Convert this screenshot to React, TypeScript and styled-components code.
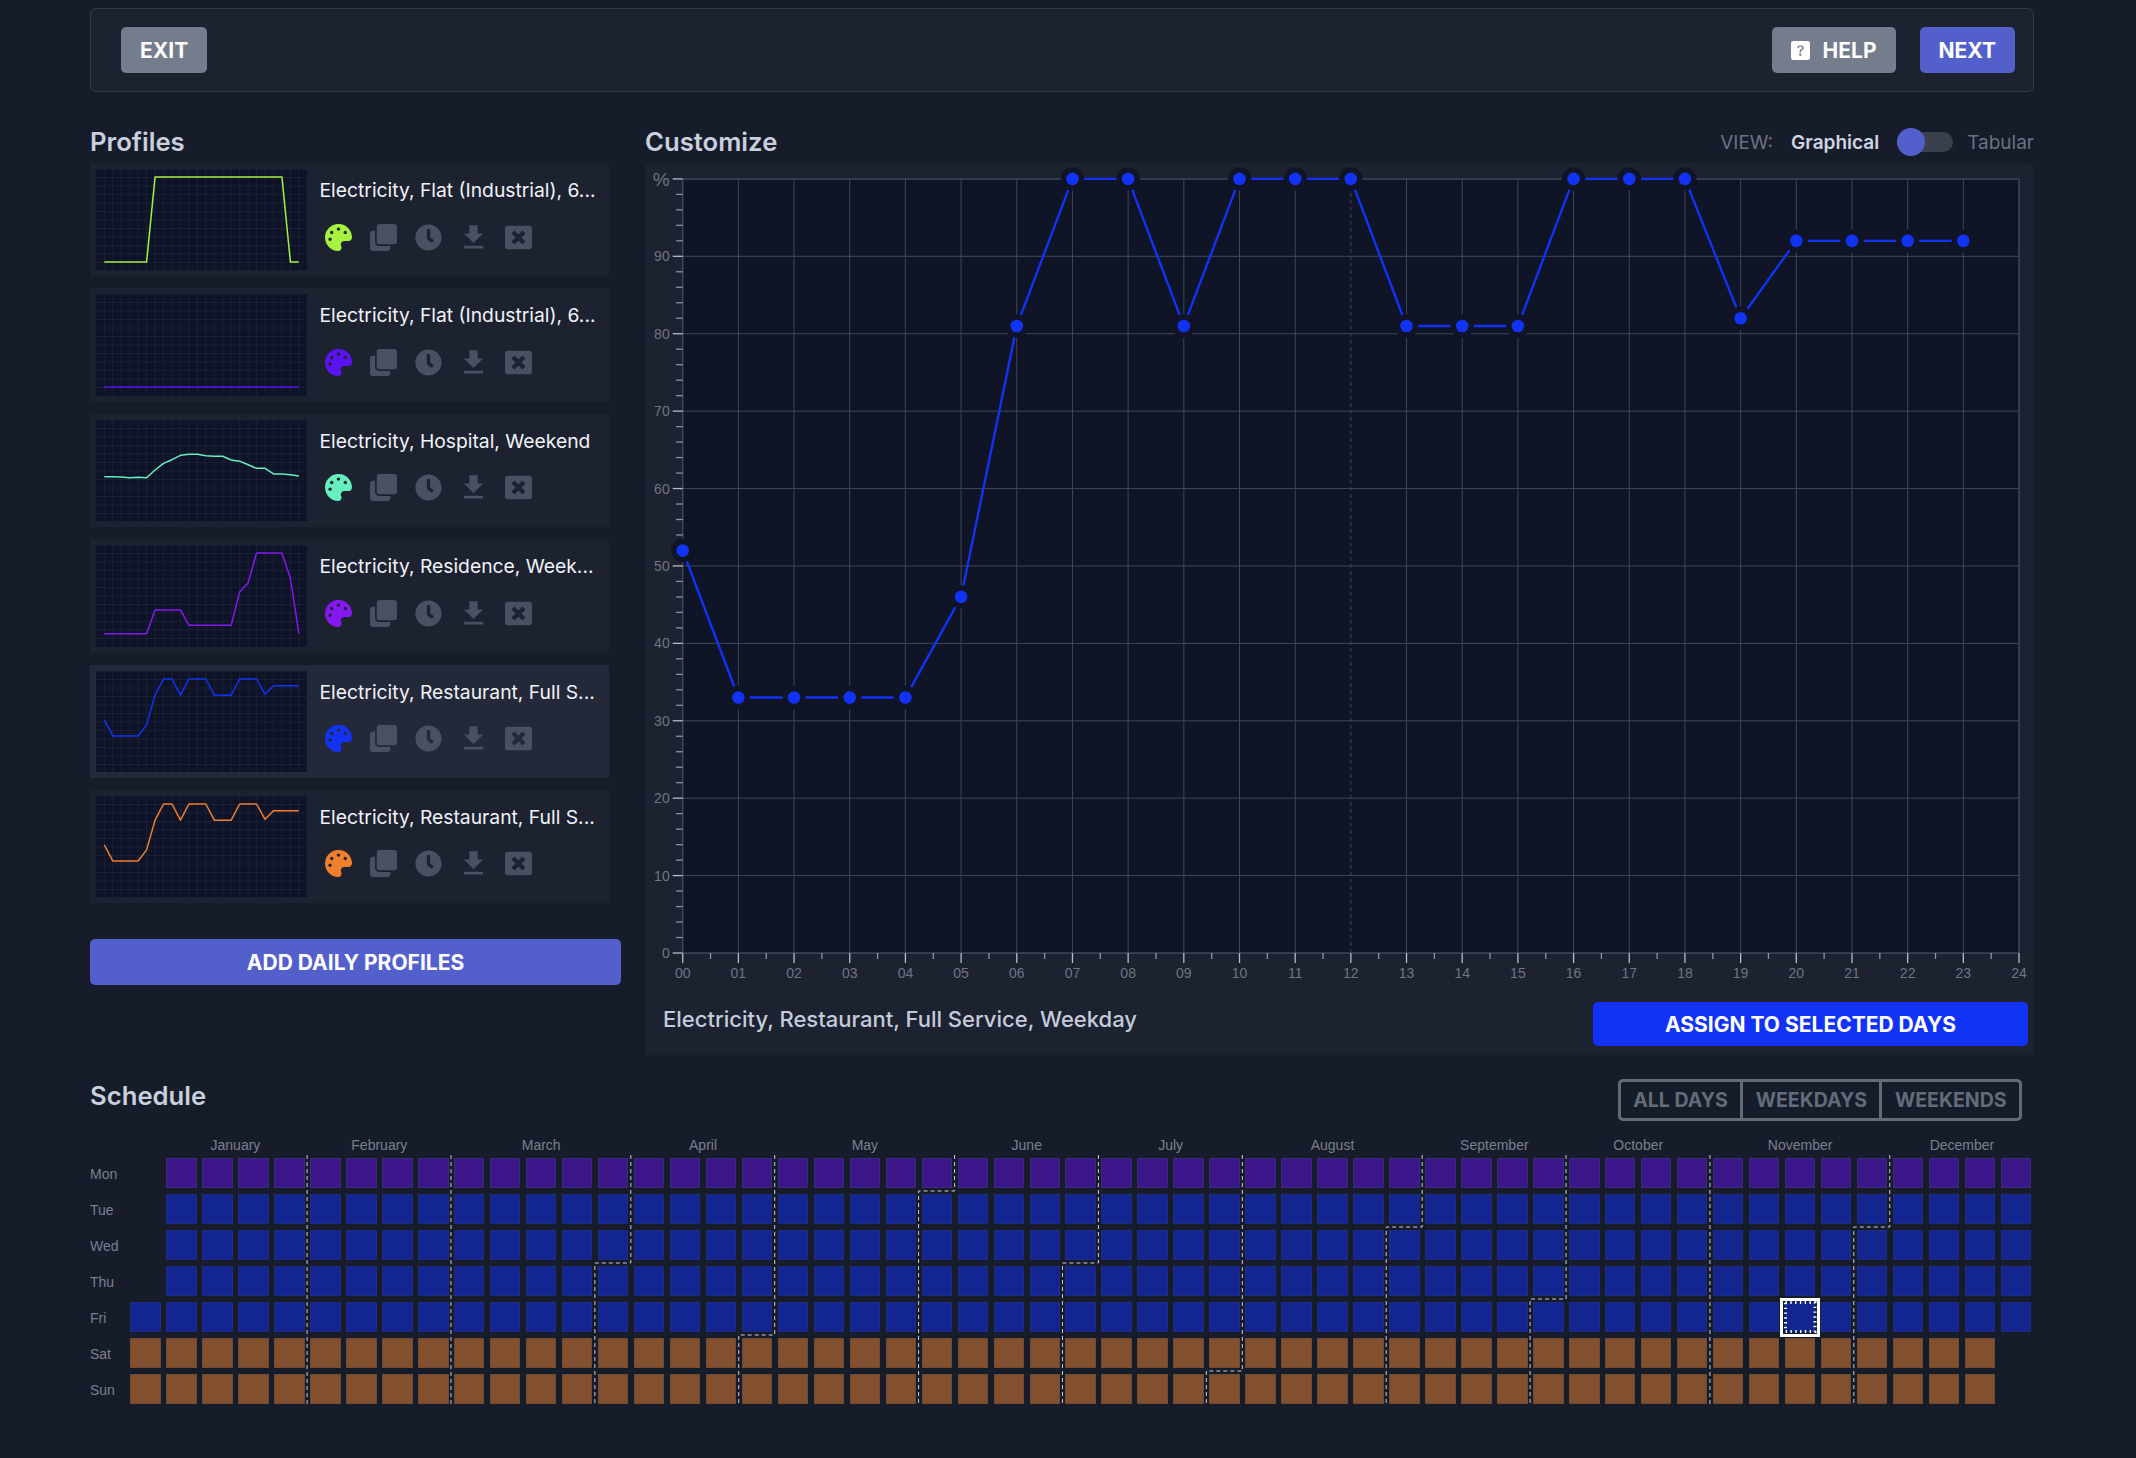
import React from 'react';
import styled, { createGlobalStyle } from 'styled-components';
import { FaPalette, FaClone, FaClock, FaWindowClose } from 'react-icons/fa';
import { MdFileDownload } from 'react-icons/md';
import { BsQuestionSquareFill } from 'react-icons/bs';

const PLOT_BG = '#0f1426';
const BLUE = '#1232f5';
const GRID = '#41465a';

const Global = createGlobalStyle`
  html, body { margin: 0; padding: 0; background: #171c2b; }
  body { font-family: Inter, "Liberation Sans", sans-serif; min-height: 100vh; }
  * { box-sizing: border-box; }
`;

const Page = styled.div`
  padding: 8px 102px 0 90px;
  width: 2136px;
`;

const TopBar = styled.header`
  height: 84px;
  background: #1c2230;
  border: 1px solid #343a46;
  border-radius: 6px;
  display: flex;
  align-items: center;
  justify-content: space-between;
  padding: 0 18px 0 30px;
`;

const ButtonGroup = styled.div`
  display: flex;
  gap: 24px;
`;

const ActionButton = styled.button<{ $tone: 'gray' | 'indigo' | 'blue' }>`
  height: ${(p) => (p.$tone === 'blue' ? 44 : 46)}px;
  border: none;
  border-radius: 5px;
  padding: 0 19px;
  display: flex;
  align-items: center;
  justify-content: center;
  gap: 13px;
  color: #fff;
  font-family: Inter, sans-serif;
  font-weight: 700;
  font-size: 21px;
  background: ${(p) => (p.$tone === 'gray' ? '#757c8b' : p.$tone === 'indigo' ? '#535fcb' : BLUE)};
`;

const WideButton = styled(ActionButton)`
  width: 531px;
  margin-top: 36px;
`;

const AssignButton = styled(ActionButton)`
  width: 435px;
`;

const Columns = styled.div`
  display: flex;
  gap: 24px;
  align-items: flex-start;
`;

const LeftColumn = styled.section`
  width: 531px;
  flex: none;
`;

const RightColumn = styled.section`
  width: 1389px;
  flex: none;
`;

const SectionHead = styled.div`
  height: 71px;
  padding-top: 31px;
  display: flex;
  justify-content: space-between;
  align-items: flex-start;
`;

const Title = styled.h2`
  margin: 0;
  font-size: 25.7px;
  line-height: 38px;
  font-weight: 600;
  color: #c8cfdd;
`;

const ViewSwitch = styled.div`
  display: flex;
  align-items: center;
  height: 38px;
  font-size: 19px;
  color: #6b7180;
`;

const ViewLabel = styled.span`
  margin-right: 18px;
`;

const ViewActive = styled.span`
  font-weight: 600;
  color: #d0d5e0;
  margin-right: 21px;
`;

const Track = styled.div`
  position: relative;
  width: 53px;
  height: 20px;
  border-radius: 10px;
  background: #3b404e;
  margin-right: 14px;
`;

const Knob = styled.div`
  position: absolute;
  left: -3px;
  top: -4px;
  width: 28px;
  height: 28px;
  border-radius: 50%;
  background: #535fcb;
`;

const CardList = styled.div`
  display: flex;
  flex-direction: column;
  gap: 12px;
  width: 519px;
`;

const Card = styled.article<{ $selected?: boolean }>`
  height: 113.4px;
  padding: 6px;
  display: flex;
  background: ${(p) => (p.$selected ? '#232938' : '#1c2230')};
`;

const ThumbSvg = styled.svg`
  width: 211px;
  height: 101.4px;
  flex: none;
  background: #0e1327;
  display: block;
`;

const CardInfo = styled.div`
  padding: 7px 0 0 12.5px;
  min-width: 0;
`;

const CardName = styled.div`
  font-size: 19.3px;
  line-height: 28px;
  color: #f1f3f7;
  white-space: nowrap;
`;

const IconRow = styled.div`
  display: flex;
  margin: 16px 0 0 -3.5px;
  height: 34px;
  align-items: center;
`;

const IconSlot = styled.span<{ $color?: string }>`
  width: 45px;
  display: flex;
  justify-content: center;
  align-items: center;
  color: ${(p) => p.$color || '#4a5060'};
`;

const ChartPanel = styled.div`
  background: #1c2230;
  border-radius: 6px 6px 0 0;
`;

const ChartSvg = styled.svg`
  display: block;
  width: 1389px;
  height: 827px;
`;

const ChartFooter = styled.div`
  height: 65px;
  background: #1c2230;
  display: flex;
  justify-content: space-between;
  align-items: flex-start;
  padding: 12px 6px 0 18px;
`;

const CurrentName = styled.div`
  font-size: 22px;
  line-height: 34px;
  font-weight: 500;
  color: #c5cbda;
`;

const ScheduleHead = styled.div`
  display: flex;
  justify-content: space-between;
  align-items: flex-start;
  padding: 22px 12px 0 0;
  height: 81px;
`;

const Segments = styled.div`
  margin-top: 2px;
  height: 42px;
  border: 3px solid #646b78;
  border-radius: 5px;
  display: flex;
`;

const Segment = styled.button`
  background: transparent;
  border: none;
  border-left: 3px solid #646b78;
  padding: 0 12.5px;
  font-family: Inter, sans-serif;
  font-weight: 700;
  font-size: 19.5px;
  color: #646b78;
  &:first-child { border-left: none; }
`;

const CalendarWrap = styled.div`
  display: grid;
  grid-template-columns: 40.3px auto;
  grid-template-rows: 22px 246px;
`;

const MonthRow = styled.div`
  grid-column: 2;
  display: grid;
  grid-template-columns: repeat(53, 30.47px);
  column-gap: 5.5px;
  font-family: "Liberation Sans", sans-serif;
  font-size: 14px;
  line-height: 18px;
  color: #7a808e;
`;

const MonthLabel = styled.span<{ $start: number; $span: number }>`
  grid-column: ${(p) => p.$start + 1} / span ${(p) => p.$span};
  text-align: center;
`;

const DayLabels = styled.div`
  grid-column: 1;
  display: grid;
  grid-template-rows: repeat(7, 30px);
  row-gap: 6px;
  font-family: "Liberation Sans", sans-serif;
  font-size: 14px;
  color: #7a808e;
`;

const DayLabel = styled.span`
  display: flex;
  align-items: center;
  padding-top: 2px;
`;

const GridArea = styled.div`
  grid-column: 2;
  position: relative;
`;

const DayGrid = styled.div`
  display: grid;
  grid-auto-flow: column;
  grid-template-rows: repeat(7, 30px);
  grid-template-columns: repeat(53, 30.47px);
  gap: 6px 5.5px;
`;

const CELL: Record<string, [string, string]> = {
  purple: ['#3b1789', '#3c2a7a'],
  blue: ['#122591', '#1f2c82'],
  orange: ['#83502f', '#6f4a33'],
};

const DayCell = styled.div<{ $kind: string; $selected?: boolean }>`
  position: relative;
  background: ${(p) => (p.$kind === 'empty' ? 'transparent' : CELL[p.$kind][0])};
  border: ${(p) =>
    p.$kind === 'empty' || p.$selected ? 'none' : `1px solid ${CELL[p.$kind][1]}`};
  background-clip: ${(p) => (p.$selected ? 'border-box' : 'padding-box')};
  z-index: ${(p) => (p.$selected ? 2 : 0)};
  ${(p) =>
    p.$selected
      ? `&::after {
          content: '';
          position: absolute;
          inset: -4.5px;
          border: 3px solid #fff;
          background: transparent;
        }`
      : ''}
`;

const SelectedTicks = styled.svg`
  position: absolute;
  left: 0;
  top: 0;
  width: 100%;
  height: 100%;
  overflow: visible;
`;

const MonthLines = styled.svg`
  position: absolute;
  left: 0;
  top: 0;
  overflow: visible;
  width: 1902px;
  height: 246px;
  z-index: 1;
  pointer-events: none;
`;

const restaurant = [52, 33, 33, 33, 33, 46, 81, 100, 100, 81, 100, 100, 100, 81, 81, 81, 100, 100, 100, 82, 92, 92, 92, 92];
const profiles = [
  { name: 'Electricity, Flat (Industrial), 6...', color: '#a6f23e', data: [0, 0, 0, 0, 0, 0, 100, 100, 100, 100, 100, 100, 100, 100, 100, 100, 100, 100, 100, 100, 100, 100, 0, 0] },
  { name: 'Electricity, Flat (Industrial), 6...', color: '#5a13f0', data: new Array(24).fill(0) },
  { name: 'Electricity, Hospital, Weekend', color: '#66f0bd', data: [42.7, 42.6, 42.4, 41.5, 42, 41.5, 50.6, 58.4, 62.7, 67.8, 69, 69, 67.4, 66.7, 66.7, 62.4, 61, 56.8, 52.5, 52.5, 45.9, 46, 45, 43.5] },
  { name: 'Electricity, Residence, Week...', color: '#8517f0', data: [5, 5, 5, 5, 5, 5, 33, 33, 33, 33, 15, 15, 15, 15, 15, 15, 54, 65, 100, 100, 100, 100, 70, 5] },
  { name: 'Electricity, Restaurant, Full S...', color: BLUE, data: restaurant, selected: true },
  { name: 'Electricity, Restaurant, Full S...', color: '#f07f2c', data: restaurant },
];

function Thumb({ color, data }: { color: string; data: number[] }) {
  const xs = Array.from({ length: 25 }, (_, i) => 8.3 + i * 8.46);
  const ys = Array.from({ length: 12 }, (_, i) => i * 8.5);
  const pts = data.map((v, i) => `${8.3 + i * 8.46},${93 - v * 0.85}`).join(' ');
  return (
    <ThumbSvg viewBox="0 0 211 101.4">
      {xs.map((x) => <line key={x} x1={x} x2={x} y1={0} y2={101.4} stroke="#1a2036" strokeWidth={1} />)}
      {ys.map((y) => <line key={y} x1={0} x2={211} y1={y} y2={y} stroke="#1a2036" strokeWidth={1} />)}
      <polyline points={pts} fill="none" stroke={color} strokeWidth={1.5} strokeLinejoin="round" />
    </ThumbSvg>
  );
}

function ProfileCard({ p }: { p: (typeof profiles)[number] }) {
  return (
    <Card $selected={(p as any).selected}>
      <Thumb color={p.color} data={p.data} />
      <CardInfo>
        <CardName>{p.name}</CardName>
        <IconRow>
          <IconSlot $color={p.color}><FaPalette size={27} /></IconSlot>
          <IconSlot><FaClone size={27} /></IconSlot>
          <IconSlot><FaClock size={27} /></IconSlot>
          <IconSlot><MdFileDownload size={33} /></IconSlot>
          <IconSlot><FaWindowClose size={27} /></IconSlot>
        </IconRow>
      </CardInfo>
    </Card>
  );
}

function Chart() {
  const x0 = 37.7;
  const step = 55.68;
  const yTop = 15.9;
  const yBot = 790;
  const xAt = (h: number) => x0 + h * step;
  const yAt = (v: number) => yBot - (v / 100) * (yBot - yTop);
  const hours = Array.from({ length: 25 }, (_, i) => i);
  const pcts = Array.from({ length: 51 }, (_, i) => i * 2);
  const labelStyle = { fontFamily: '"Liberation Sans", sans-serif', fontSize: 14, fill: '#6f7583' };
  return (
    <ChartSvg viewBox="0 0 1389 827">
      <rect x={x0} y={yTop} width={xAt(24) - x0} height={yBot - yTop} fill={PLOT_BG} />
      {hours.map((h) => (
        <line key={h} x1={xAt(h)} x2={xAt(h)} y1={yTop} y2={yBot} stroke={GRID}
          strokeWidth={h === 0 || h === 24 ? 1.5 : 1} strokeDasharray={h === 12 ? '4 3' : undefined} />
      ))}
      {pcts.filter((v) => v % 10 === 0).map((v) => (
        <line key={v} x1={x0} x2={xAt(24)} y1={yAt(v)} y2={yAt(v)} stroke={GRID}
          strokeWidth={v === 0 || v === 100 ? 1.5 : 1} />
      ))}
      {pcts.map((v) => (
        <line key={v} x1={x0 - (v % 10 === 0 ? 10 : 6.5)} x2={x0} y1={yAt(v)} y2={yAt(v)}
          stroke={v % 10 === 0 ? '#b9bdc6' : '#8f94a0'} strokeWidth={1.3} />
      ))}
      {hours.map((h) => (
        <line key={h} x1={xAt(h)} x2={xAt(h)} y1={yBot} y2={yBot + 10} stroke="#b9bdc6" strokeWidth={1.3} />
      ))}
      {hours.slice(0, 24).map((h) => (
        <line key={h} x1={xAt(h + 0.5)} x2={xAt(h + 0.5)} y1={yBot} y2={yBot + 6} stroke="#8f94a0" strokeWidth={1.3} />
      ))}
      {pcts.filter((v) => v % 10 === 0 && v < 100).map((v) => (
        <text key={v} x={x0 - 13} y={yAt(v) + 5} textAnchor="end" {...labelStyle}>{v}</text>
      ))}
      <text x={x0 - 13} y={yTop + 7.5} textAnchor="end" {...labelStyle} fontSize={19}>%</text>
      {hours.map((h) => (
        <text key={h} x={xAt(h)} y={yBot + 25} textAnchor="middle" {...labelStyle}>
          {String(h).padStart(2, '0')}
        </text>
      ))}
      <polyline points={restaurant.map((v, i) => `${xAt(i)},${yAt(v)}`).join(' ')} fill="none" stroke={BLUE} strokeWidth={2.4} />
      {restaurant.map((v, i) => <circle key={i} cx={xAt(i)} cy={yAt(v)} r={11.7} fill={PLOT_BG} />)}
      {restaurant.map((v, i) => <circle key={i} cx={xAt(i)} cy={yAt(v)} r={6.3} fill={BLUE} />)}
    </ChartSvg>
  );
}

const months = [
  ['January', 1, 4], ['February', 5, 4], ['March', 9, 5], ['April', 14, 4], ['May', 18, 5], ['June', 23, 4],
  ['July', 27, 4], ['August', 31, 5], ['September', 36, 4], ['October', 40, 4], ['November', 44, 5], ['December', 49, 4],
] as const;

const days = ['Mon', 'Tue', 'Wed', 'Thu', 'Fri', 'Sat', 'Sun'];

// 2021 calendar: 1 Jan is a Friday in week column 0, weeks begin on Monday
const pos = (dayOfYear: number) => {
  const n = dayOfYear + 4;
  return { col: Math.floor(n / 7), row: n % 7 };
};

const monthStarts = [31, 59, 90, 120, 151, 181, 212, 243, 273, 304, 334];

function monthPath(d: number) {
  const { col, row } = pos(d);
  const X = (c: number) => c * 35.97 - 2.75;
  const Y = (r: number) => r * 36 - 3;
  const top = -3;
  const bottom = 248;
  if (row === 0) return `M${X(col)},${top} V${bottom}`;
  return `M${X(col + 1)},${top} V${Y(row)} H${X(col)} V${bottom}`;
}

const cells: { kind: string; selected?: boolean }[] = [];
for (let c = 0; c < 53; c++) {
  for (let r = 0; r < 7; r++) {
    const d = c * 7 + r - 4;
    const inYear = d >= 0 && d < 365;
    const kind = !inYear ? 'empty' : r === 0 ? 'purple' : r < 5 ? 'blue' : 'orange';
    cells.push({ kind, selected: c === 46 && r === 4 });
  }
}

export default function App() {
  return (
    <Page>
      <Global />
      <TopBar>
        <ActionButton $tone="gray">EXIT</ActionButton>
        <ButtonGroup>
          <ActionButton $tone="gray"><BsQuestionSquareFill size={19} />HELP</ActionButton>
          <ActionButton $tone="indigo">NEXT</ActionButton>
        </ButtonGroup>
      </TopBar>
      <Columns>
        <LeftColumn>
          <SectionHead><Title>Profiles</Title></SectionHead>
          <CardList>
            {profiles.map((p, i) => <ProfileCard key={i} p={p} />)}
          </CardList>
          <WideButton $tone="indigo">ADD DAILY PROFILES</WideButton>
        </LeftColumn>
        <RightColumn>
          <SectionHead>
            <Title>Customize</Title>
            <ViewSwitch>
              <ViewLabel>VIEW:</ViewLabel>
              <ViewActive>Graphical</ViewActive>
              <Track><Knob /></Track>
              <span>Tabular</span>
            </ViewSwitch>
          </SectionHead>
          <ChartPanel><Chart /></ChartPanel>
          <ChartFooter>
            <CurrentName>Electricity, Restaurant, Full Service, Weekday</CurrentName>
            <AssignButton $tone="blue">ASSIGN TO SELECTED DAYS</AssignButton>
          </ChartFooter>
        </RightColumn>
      </Columns>
      <ScheduleHead>
        <Title>Schedule</Title>
        <Segments>
          <Segment>ALL DAYS</Segment>
          <Segment>WEEKDAYS</Segment>
          <Segment>WEEKENDS</Segment>
        </Segments>
      </ScheduleHead>
      <CalendarWrap>
        <MonthRow>
          {months.map(([m, s, n]) => <MonthLabel key={m} $start={s} $span={n}>{m}</MonthLabel>)}
        </MonthRow>
        <DayLabels>
          {days.map((d) => <DayLabel key={d}>{d}</DayLabel>)}
        </DayLabels>
        <GridArea>
          <DayGrid>
            {cells.map((c, i) => (
              <DayCell key={i} $kind={c.kind} $selected={c.selected}>
                {c.selected && (
                  <SelectedTicks viewBox="0 0 30.47 30">
                    <rect x={0.5} y={0.5} width={29.47} height={29} fill="none" stroke="#fff" strokeWidth={3} strokeDasharray="1.4 3.4" />
                  </SelectedTicks>
                )}
              </DayCell>
            ))}
          </DayGrid>
          <MonthLines viewBox="0 0 1902 246">
            {monthStarts.map((d) => (
              <path key={d} d={monthPath(d)} fill="none" stroke="#c9ccd4" strokeWidth={1} strokeDasharray="4 3" />
            ))}
          </MonthLines>
        </GridArea>
      </CalendarWrap>
    </Page>
  );
}
